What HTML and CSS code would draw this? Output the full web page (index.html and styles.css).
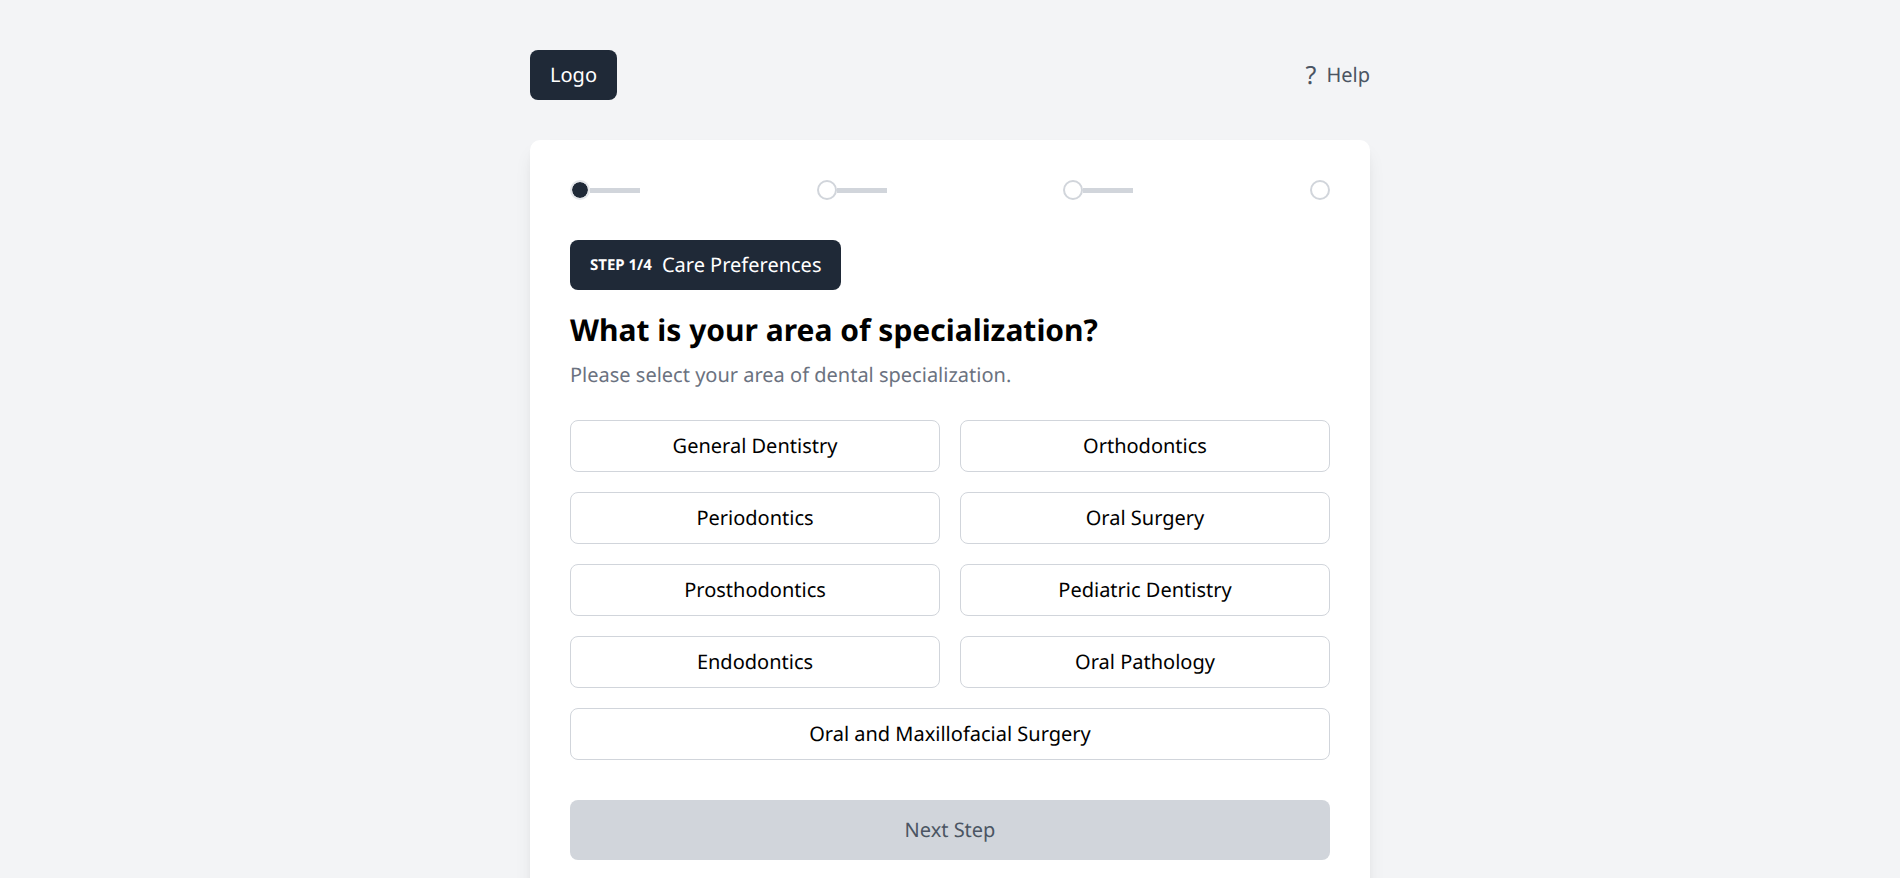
FILE: index.html
```html
<!DOCTYPE html>
<html lang="en">
<head>
<meta charset="utf-8">
<title>Care Preferences</title>
<link rel="stylesheet" href="styles.css">
</head>
<body>
<div class="page">
  <header class="header">
    <div class="logo">Logo</div>
    <a class="help" href="#help"><span class="help-icon" aria-hidden="true">?</span><span>Help</span></a>
  </header>
  <main class="card">
    <ol class="steps" aria-label="Progress">
      <li class="step"><span class="dot dot-active"></span><span class="line"></span></li>
      <li class="step"><span class="dot"></span><span class="line"></span></li>
      <li class="step"><span class="dot"></span><span class="line"></span></li>
      <li class="step"><span class="dot"></span></li>
    </ol>
    <div class="badge"><span class="badge-step">STEP 1/4</span><span>Care Preferences</span></div>
    <h1 class="title">What is your area of specialization?</h1>
    <p class="subtitle">Please select your area of dental specialization.</p>
    <div class="options">
      <button class="option" type="button">General Dentistry</button>
      <button class="option" type="button">Orthodontics</button>
      <button class="option" type="button">Periodontics</button>
      <button class="option" type="button">Oral Surgery</button>
      <button class="option" type="button">Prosthodontics</button>
      <button class="option" type="button">Pediatric Dentistry</button>
      <button class="option" type="button">Endodontics</button>
      <button class="option" type="button">Oral Pathology</button>
      <button class="option option-wide" type="button">Oral and Maxillofacial Surgery</button>
    </div>
    <button class="next" type="button" disabled>Next Step</button>
  </main>
</div>
</body>
</html>
```

FILE: styles.css
```css
*, *::before, *::after { box-sizing: border-box; }
body {
  margin: 0;
  background: #f3f4f6;
  color: #000;
  font: 20px/30px "Noto Sans", sans-serif;
  text-rendering: geometricPrecision;
}
.page { max-width: 840px; margin: 0 auto; padding: 50px 0; }
.header { display: flex; justify-content: space-between; align-items: center; margin-bottom: 40px; }
.logo { padding: 10px 20px; border-radius: 8px; background: #1f2937; color: #fff; }
.help { display: flex; align-items: center; gap: 10px; color: #4b5563; text-decoration: none; }
.help-icon { font-size: 25px; }
.card {
  padding: 40px;
  border-radius: 10px;
  background: #fff;
  box-shadow: 0 12px 19px -4px rgb(0 0 0 / 10%), 0 5px 8px -5px rgb(0 0 0 / 10%);
}
.steps { display: flex; justify-content: space-between; margin: 0 0 40px; padding: 0; list-style: none; }
.step { display: flex; align-items: center; }
.dot { width: 20px; height: 20px; border: 2px solid #d1d5db; border-radius: 50%; background: #fff; }
.dot-active { border-color: #e5e7eb; background: #1f2937; background-clip: padding-box; }
.line { width: 50px; height: 5px; background: #d1d5db; }
.badge { display: inline-flex; align-items: center; gap: 10px; padding: 10px 20px; border-radius: 8px; background: #1f2937; color: #fff; }
.badge-step { font-size: 15px; line-height: 20px; font-weight: 700; }
.title { margin: 20px 0 10px; font-size: 30px; line-height: 40px; font-weight: 700; }
.subtitle { margin: 0 0 30px; color: #6b7280; }
.options { display: grid; grid-template-columns: 1fr 1fr; gap: 20px; margin-bottom: 40px; }
.option { padding: 10px; border: 1px solid #d1d5db; border-radius: 8px; background: #fff; color: #000; font: inherit; text-rendering: inherit; }
.option-wide { grid-column: 1 / -1; }
.next { display: block; width: 100%; padding: 15px; border: 0; border-radius: 8px; background: #d1d5db; color: #4b5563; font: inherit; text-rendering: inherit; }
```
